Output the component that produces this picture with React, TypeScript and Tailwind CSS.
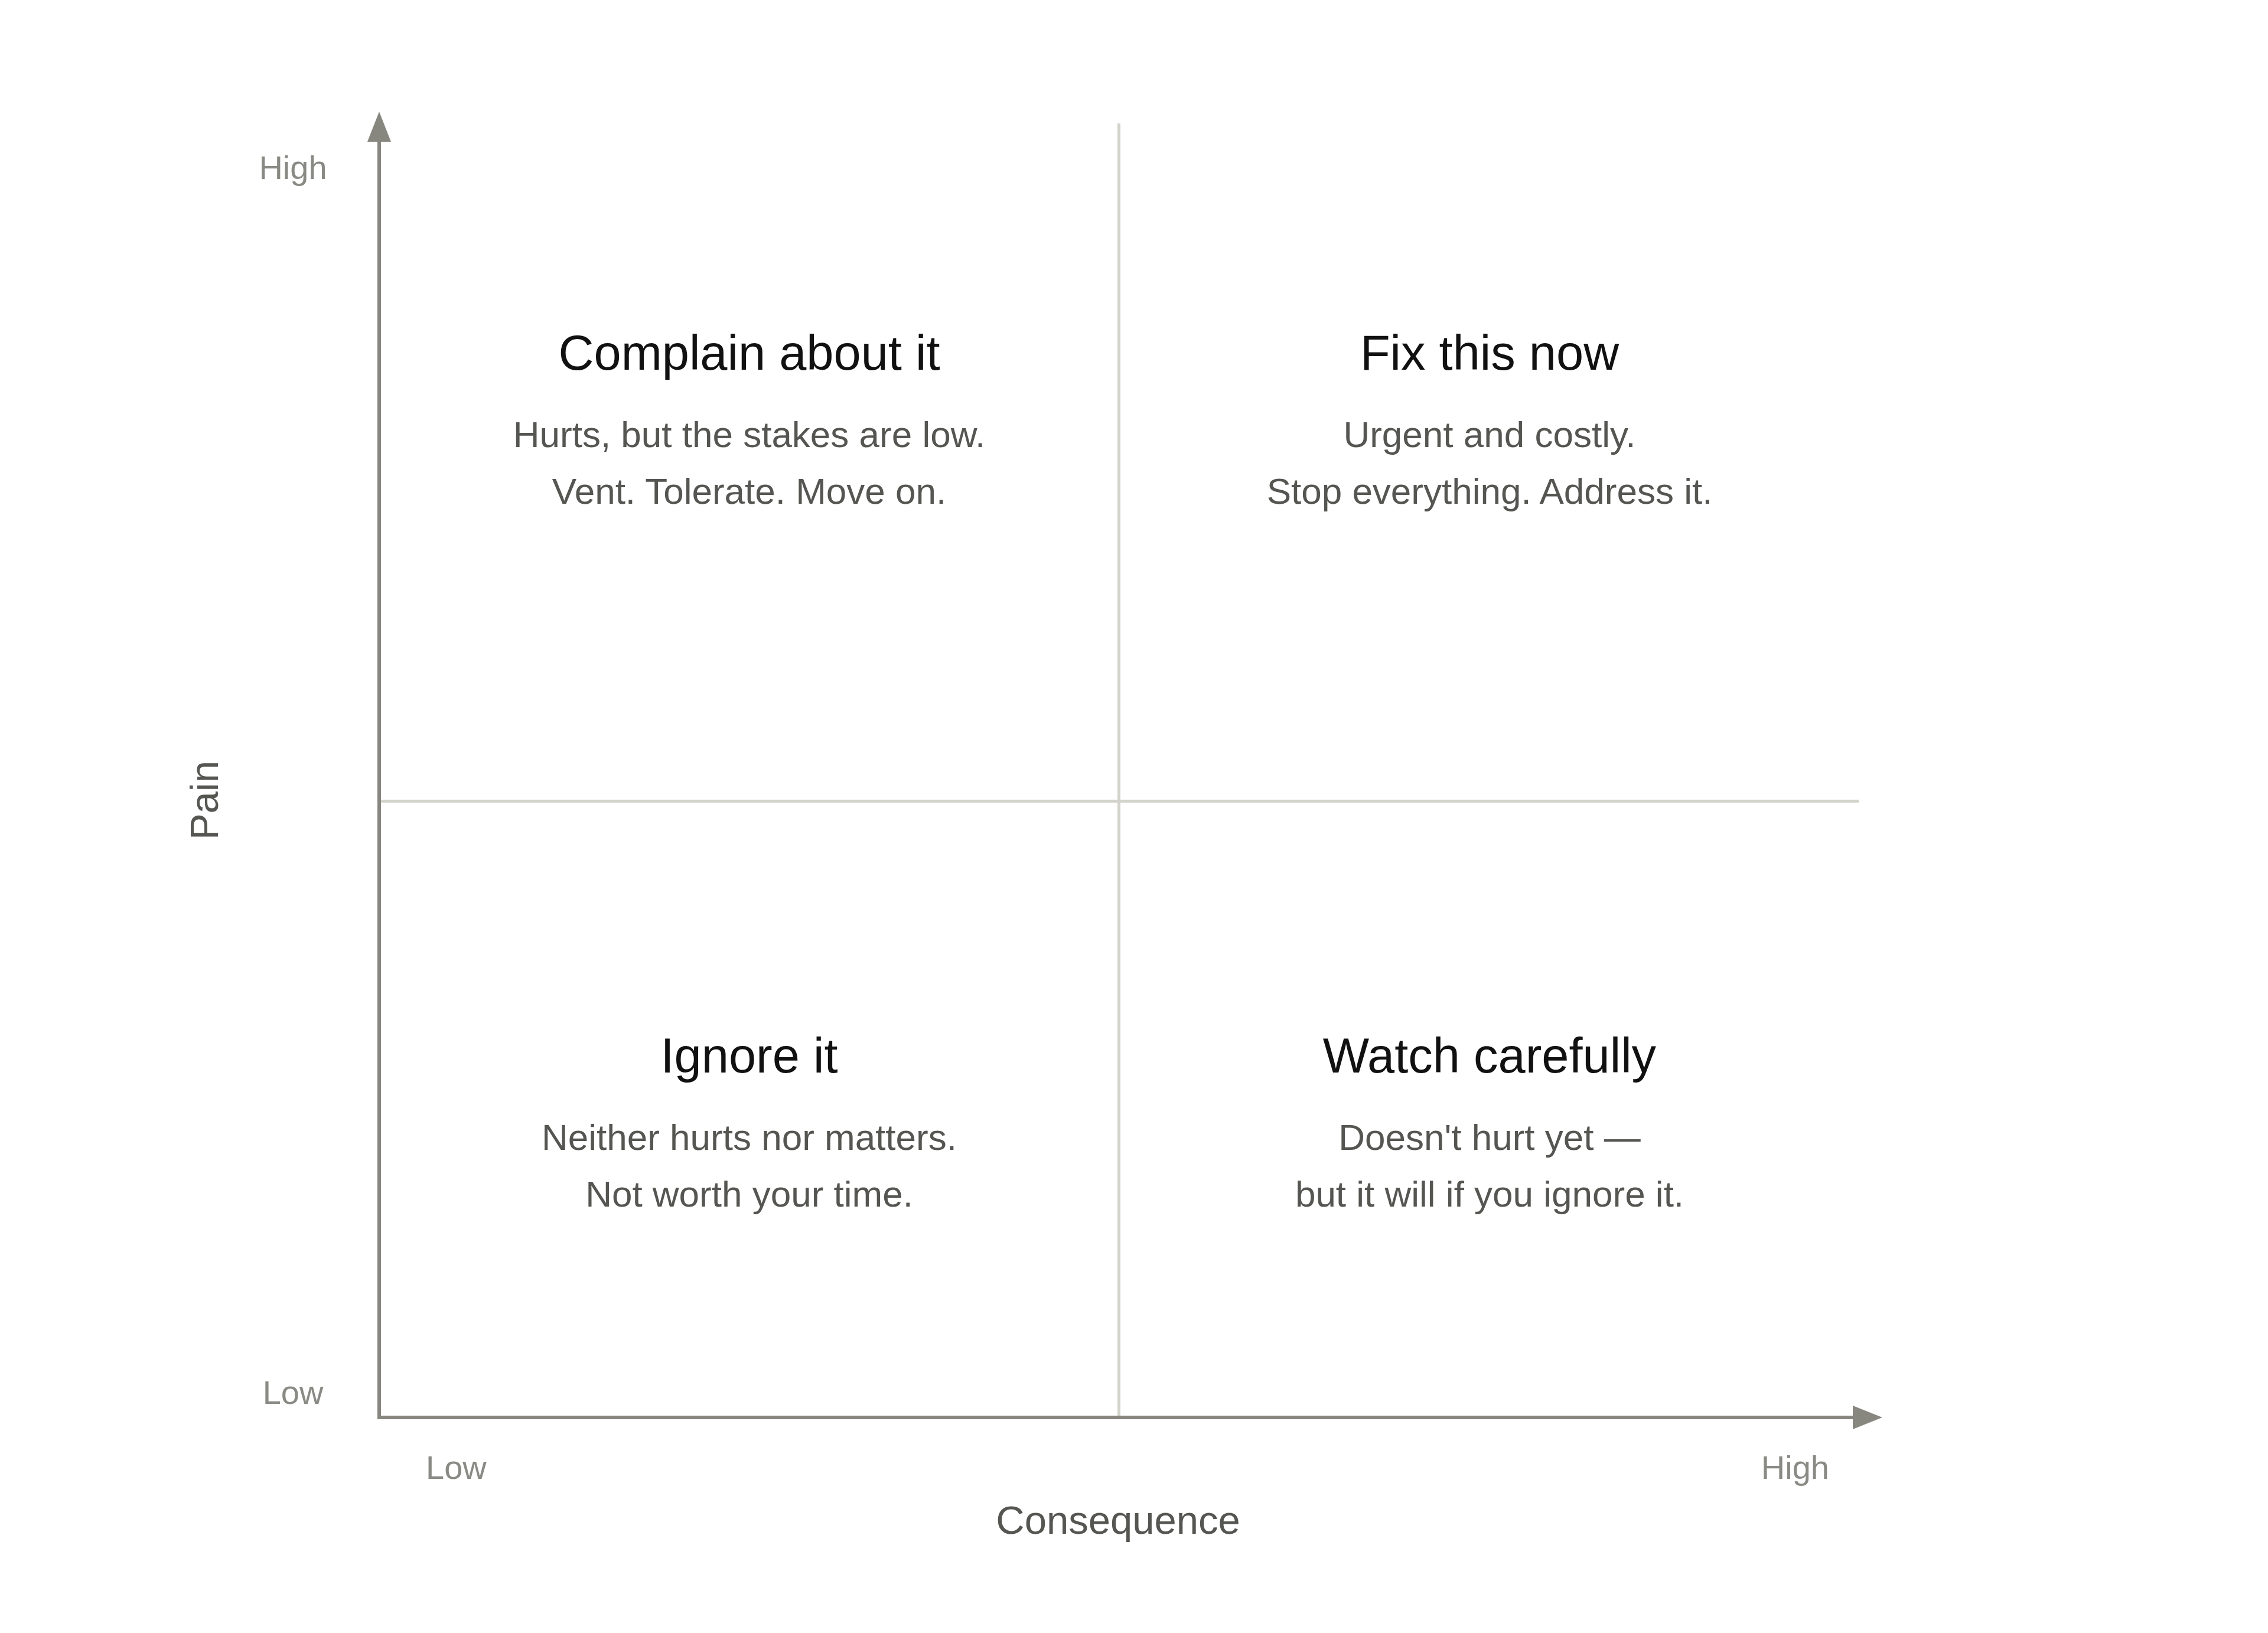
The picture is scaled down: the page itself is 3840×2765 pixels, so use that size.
const quadrants = [
  {
    title: 'Complain about it',
    lines: ['Hurts, but the stakes are low.', 'Vent. Tolerate. Move on.'],
    cell: 'border-r-[5px] border-b-[5px] pt-[339px]',
  },
  {
    title: 'Fix this now',
    lines: ['Urgent and costly.', 'Stop everything. Address it.'],
    cell: 'border-b-[5px] pt-[339px]',
  },
  {
    title: 'Ignore it',
    lines: ['Neither hurts nor matters.', 'Not worth your time.'],
    cell: 'border-r-[5px] pt-[379px]',
  },
  {
    title: 'Watch carefully',
    lines: ['Doesn\'t hurt yet —', 'but it will if you ignore it.'],
    cell: 'pt-[379px]',
  },
]

function Quadrant({ title, lines, cell }: { title: string, lines: string[], cell: string }) {
  return (
    <div className={`flex flex-col items-center border-[#d3d3cb] text-center ${cell}`}>
      <div className="text-[83px] leading-[100px] text-[#111111]">{title}</div>
      <div className="mt-[40px] text-[62px] leading-[96px] text-[#555552]">
        {lines.map(line => (
          <div key={line} className="whitespace-nowrap">{line}</div>
        ))}
      </div>
    </div>
  )
}

export default function App() {
  return (
    <div className="h-[2765px] w-[3840px] bg-white font-['Liberation_Sans',Arial,sans-serif]">
      <div className="flex pt-[209px]">
        {/* y axis title */}
        <div className="flex w-[392px] justify-end">
          <div className="mt-[1079px] h-fit rotate-180 text-[67px] leading-[92px] text-[#555552] [writing-mode:vertical-rl]">
            Pain
          </div>
        </div>

        {/* y ticks */}
        <div className="flex h-[2194px] w-[208px] flex-col items-center justify-between pt-[43px] pb-[13px] text-[56px] leading-[64px] text-[#8a8a85]">
          <span>High</span>
          <span>Low</span>
        </div>

        <div className="ml-[39px] flex w-[2508px] flex-col">
          <div className="relative h-[2194px] border-b-[6px] border-l-[6px] border-[#878780]">
            <div className="grid h-full grid-cols-[1252px_1250px] grid-rows-[1150px_1038px]">
              {quadrants.map(q => (
                <Quadrant key={q.title} {...q} />
              ))}
            </div>
            {/* arrowheads sit on the axis ends */}
            <svg className="absolute -top-[20px] -left-[23px]" width="40" height="51" viewBox="0 0 40 51" aria-hidden="true">
              <polygon points="20,0 40,51 0,51" fill="#878780" />
            </svg>
            <svg className="absolute -right-[40px] -bottom-[23px]" width="50" height="40" viewBox="0 0 50 40" aria-hidden="true">
              <polygon points="0,0 50,20 0,40" fill="#878780" />
            </svg>
          </div>

          {/* x ticks */}
          <div className="mt-[50px] flex justify-between pr-[50px] pl-[82px] text-[56px] leading-[64px] text-[#8a8a85]">
            <span>Low</span>
            <span>High</span>
          </div>

          <div className="mt-[17px] text-center text-[67px] leading-[80px] text-[#555552]">
            Consequence
          </div>
        </div>
      </div>
    </div>
  )
}
